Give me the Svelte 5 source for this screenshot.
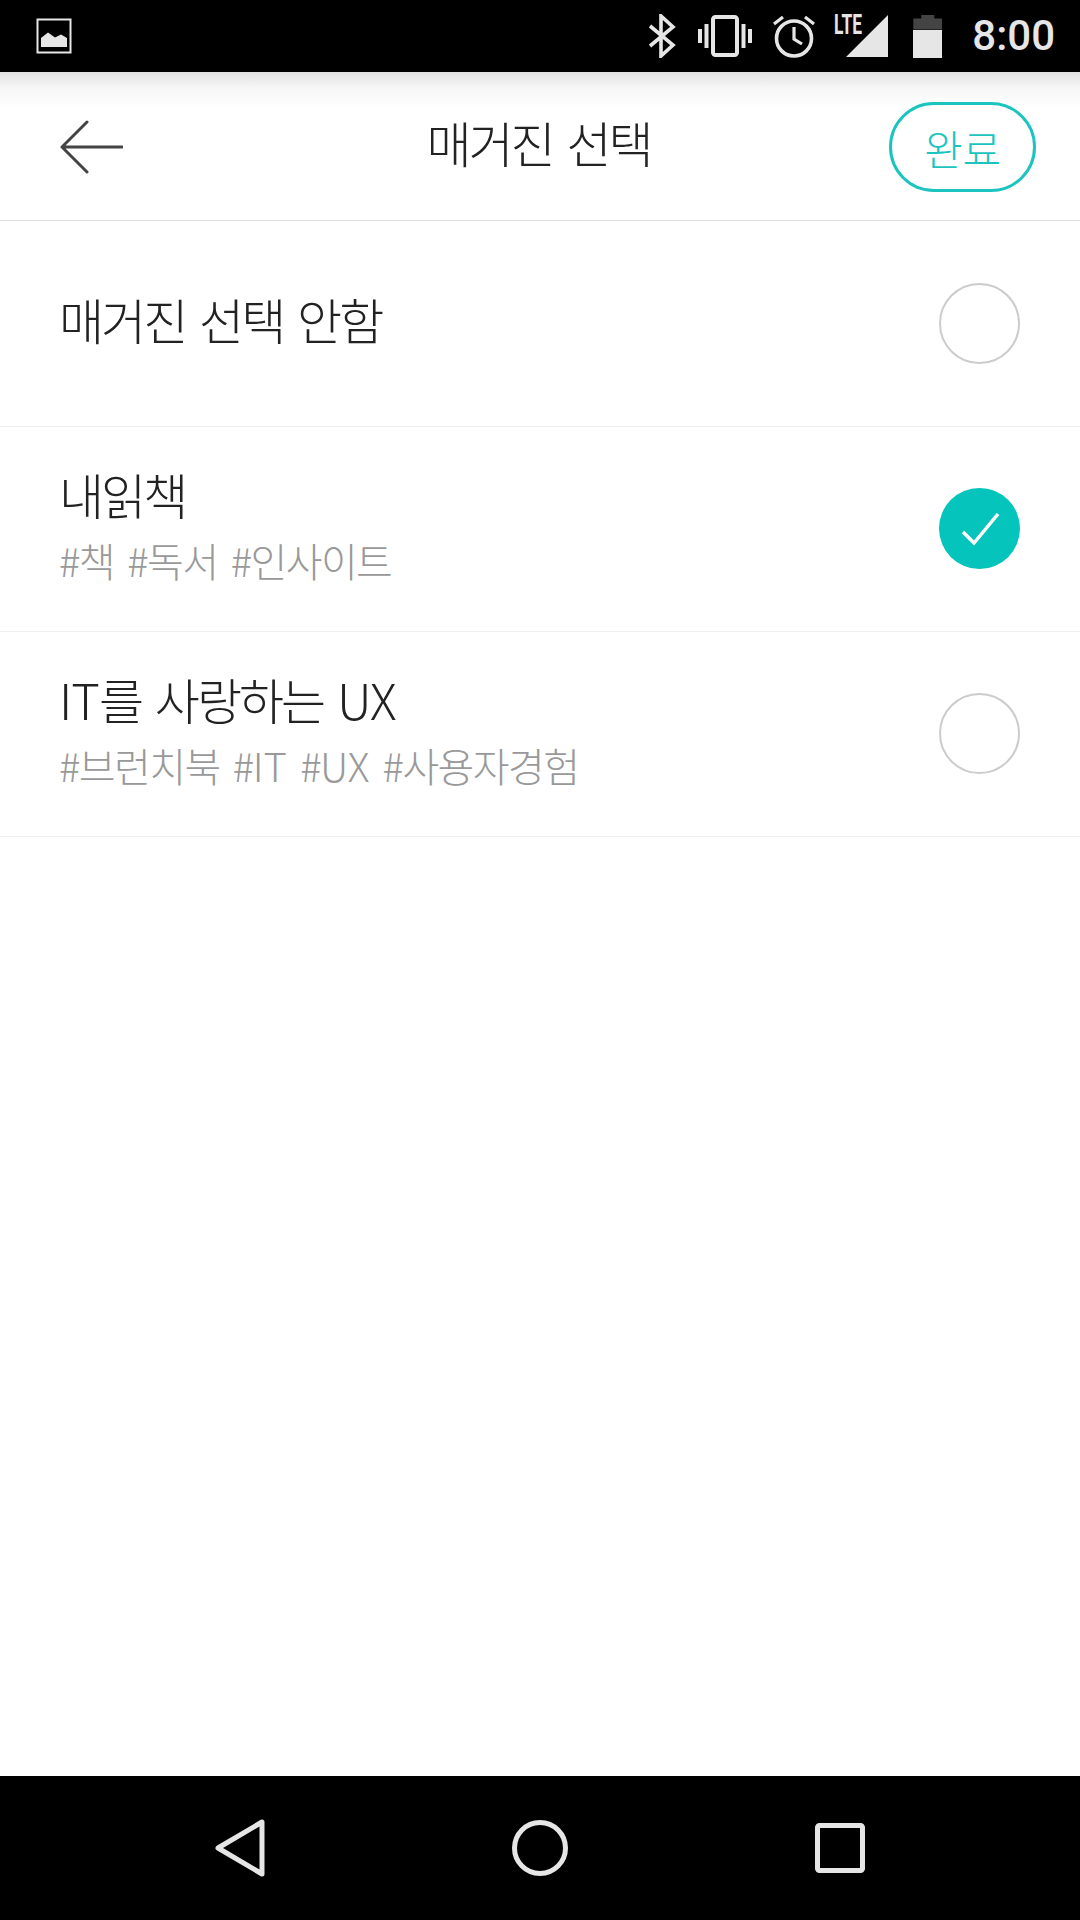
<script>
	const rows = [
		{ title: '매거진 선택 안함', tags: '', checked: false },
		{ title: '내읽책', tags: '#책 #독서 #인사이트', checked: true },
		{ title: 'IT를 사랑하는 UX', tags: '#브런치북 #IT #UX #사용자경험', checked: false }
	];

	// latin letters run wider than hangul in the original font
	const parts = (text) => text.split(/([A-Za-z]+)/);
	const isLatin = (part) => /^[A-Za-z]+$/.test(part);
</script>

<div class="screen">
	<div class="status">
		<svg class="pic" width="36" height="36" viewBox="0 0 36 36">
			<rect x="1.5" y="1.5" width="33" height="33" fill="none" stroke="#e6e6e6" stroke-width="2" />
			<path d="M5 29V20L12 14.5L19 19.5L25 16.5L31 20V29Z" fill="#e6e6e6" />
		</svg>
		<div class="status-right">
			<svg class="bt" width="28" height="44" viewBox="0 0 28 44">
				<path d="M2 12L25 31L13 42V2L25 13L2 32" fill="none" stroke="#e6e6e6" stroke-width="3.6" />
			</svg>
			<svg class="vib" width="54" height="42" viewBox="0 0 54 42">
				<rect x="15" y="2" width="24" height="38" rx="2.5" fill="none" stroke="#e6e6e6" stroke-width="4" />
				<path d="M2 14V28M8.500 9V33M45.500 9V33M52 14V28" stroke="#e6e6e6" stroke-width="4" />
			</svg>
			<svg class="alarm" width="44" height="44" viewBox="0 0 44 44">
				<circle cx="22" cy="24.500" r="17.500" fill="none" stroke="#e6e6e6" stroke-width="3.600" />
				<path d="M22 13V25L30 30M2 10L11 3M42 10L33 3" fill="none" stroke="#e6e6e6" stroke-width="3.200" />
			</svg>
			<div class="signal">
				<svg width="42" height="42" viewBox="0 0 42 42"><path d="M42 0V42H0Z" fill="#e6e6e6" /></svg>
				<span class="lte">LTE</span>
			</div>
			<div class="battery"><i></i><b></b></div>
			<span class="clock">8:00</span>
		</div>
	</div>

	<header>
		<svg class="back" width="64" height="56" viewBox="0 0 64 56">
			<path d="M63 27H3M28 2L3 27L28 52" fill="none" stroke="#444" stroke-width="3" stroke-linecap="round" stroke-linejoin="round" />
		</svg>
		<h1>매거진 선택</h1>
		<button>완료</button>
	</header>

	<ul>
		{#each rows as row}
			<li>
				<div class="text">
					<div class="title">{#each parts(row.title) as part}{#if isLatin(part)}<span class="latin">{part}</span>{:else}{part}{/if}{/each}</div>
					{#if row.tags}
						<div class="tags">{#each parts(row.tags) as part}{#if isLatin(part)}<span class="latin">{part}</span>{:else}{part}{/if}{/each}</div>
					{/if}
				</div>
				{#if row.checked}
					<svg class="radio" width="81" height="81" viewBox="0 0 81 81">
						<circle cx="40.500" cy="40.500" r="40.500" fill="#05c4bb" />
						<path d="M24 44L35 55L59 26" fill="none" stroke="#fff" stroke-width="3.500" />
					</svg>
				{:else}
					<span class="radio empty"></span>
				{/if}
			</li>
		{/each}
	</ul>

	<nav>
		<svg width="50" height="58" viewBox="0 0 50 58">
			<path d="M47 3V55L3 29Z" fill="none" stroke="#e6e6e6" stroke-width="5" stroke-linejoin="round" />
		</svg>
		<svg width="56" height="56" viewBox="0 0 56 56">
			<circle cx="28" cy="28" r="25.500" fill="none" stroke="#e6e6e6" stroke-width="5" />
		</svg>
		<svg width="50" height="50" viewBox="0 0 50 50">
			<rect x="2.500" y="2.500" width="45" height="45" rx="2" fill="none" stroke="#e6e6e6" stroke-width="5" />
		</svg>
	</nav>
</div>

<style>
	:global(body) {
		margin: 0;
		background: #fff;
	}

	.screen {
		width: 1080px;
		height: 1920px;
		display: flex;
		flex-direction: column;
		font-family: 'Noto Sans CJK KR', 'Noto Sans', sans-serif;
		font-weight: 200;
		overflow: hidden;
	}

	.status {
		height: 72px;
		background: #000;
		display: flex;
		align-items: center;
		justify-content: space-between;
		padding: 0 25px 0 36px;
		flex: none;
	}

	.status-right {
		display: flex;
		align-items: center;
	}

	.bt {
		margin-right: 22px;
	}

	.vib {
		margin-right: 20px;
	}

	.alarm {
		margin-right: 30px;
	}

	.signal {
		position: relative;
		width: 42px;
		height: 42px;
		margin-right: 25px;
	}

	.signal svg {
		display: block;
	}

	.lte {
		position: absolute;
		left: -12px;
		top: -4px;
		font: 700 28px/28px Roboto, sans-serif;
		color: #e6e6e6;
		transform: scaleX(0.62);
		transform-origin: left top;
	}

	.battery {
		width: 29px;
		height: 43px;
		display: flex;
		flex-direction: column;
		margin-right: 30px;
	}

	.battery i {
		height: 15px;
		background: #444;
		clip-path: polygon(0 4px, 8px 4px, 8px 0, 21px 0, 21px 4px, 29px 4px, 29px 15px, 0 15px);
	}

	.battery b {
		flex: 1;
		background: #e6e6e6;
	}

	.clock {
		font: 500 42px/72px Roboto, sans-serif;
		color: #e6e6e6;
	}

	header {
		height: 149px;
		flex: none;
		box-sizing: border-box;
		border-bottom: 1px solid #ddd;
		background: linear-gradient(#e2e2e2, #f6f6f6 16px, #fff 36px);
		display: flex;
		align-items: center;
		justify-content: space-between;
		padding: 2px 44px 0 59px;
		position: relative;
	}

	.back {
		margin-top: 2px;
	}

	h1 {
		position: absolute;
		left: 0;
		right: 3px;
		top: 38px;
		margin: 0;
		text-align: center;
		font-size: 49px;
		line-height: 64px;
		font-weight: 200;
		letter-spacing: -3px;
		word-spacing: 6px;
		color: #222;
	}

	button {
		width: 147px;
		height: 90px;
		box-sizing: border-box;
		border: 3px solid #1cc4bf;
		border-radius: 45px;
		background: #fff;
		color: #1cc4bf;
		font-family: inherit;
		font-weight: 200;
		font-size: 42px;
		letter-spacing: -0.500px;
		padding: 0;
	}

	ul {
		list-style: none;
		margin: 0;
		padding: 1px 0 0;
		flex: 1;
	}

	li {
		height: 205px;
		box-sizing: border-box;
		border-bottom: 1px solid #eee;
		display: flex;
		align-items: center;
		justify-content: space-between;
		padding: 0 60px 0 59px;
	}

	.title {
		font-size: 49px;
		line-height: 62px;
		letter-spacing: -3px;
		word-spacing: 6px;
		color: #222;
		margin-top: -11px;
	}

	.title .latin {
		letter-spacing: -1px;
	}

	.tags {
		font-size: 40px;
		line-height: 50px;
		letter-spacing: -1.600px;
		word-spacing: 6px;
		color: #999;
		margin-top: 10px;
	}

	.tags .latin {
		letter-spacing: 0;
	}

	.radio {
		width: 81px;
		height: 81px;
		flex: none;
		display: block;
		margin-top: -1px;
	}

	.empty {
		box-sizing: border-box;
		border: 2px solid #ccc;
		border-radius: 50%;
	}

	nav {
		height: 144px;
		flex: none;
		background: #000;
		display: flex;
		justify-content: center;
		align-items: center;
		gap: 247px;
	}
</style>
